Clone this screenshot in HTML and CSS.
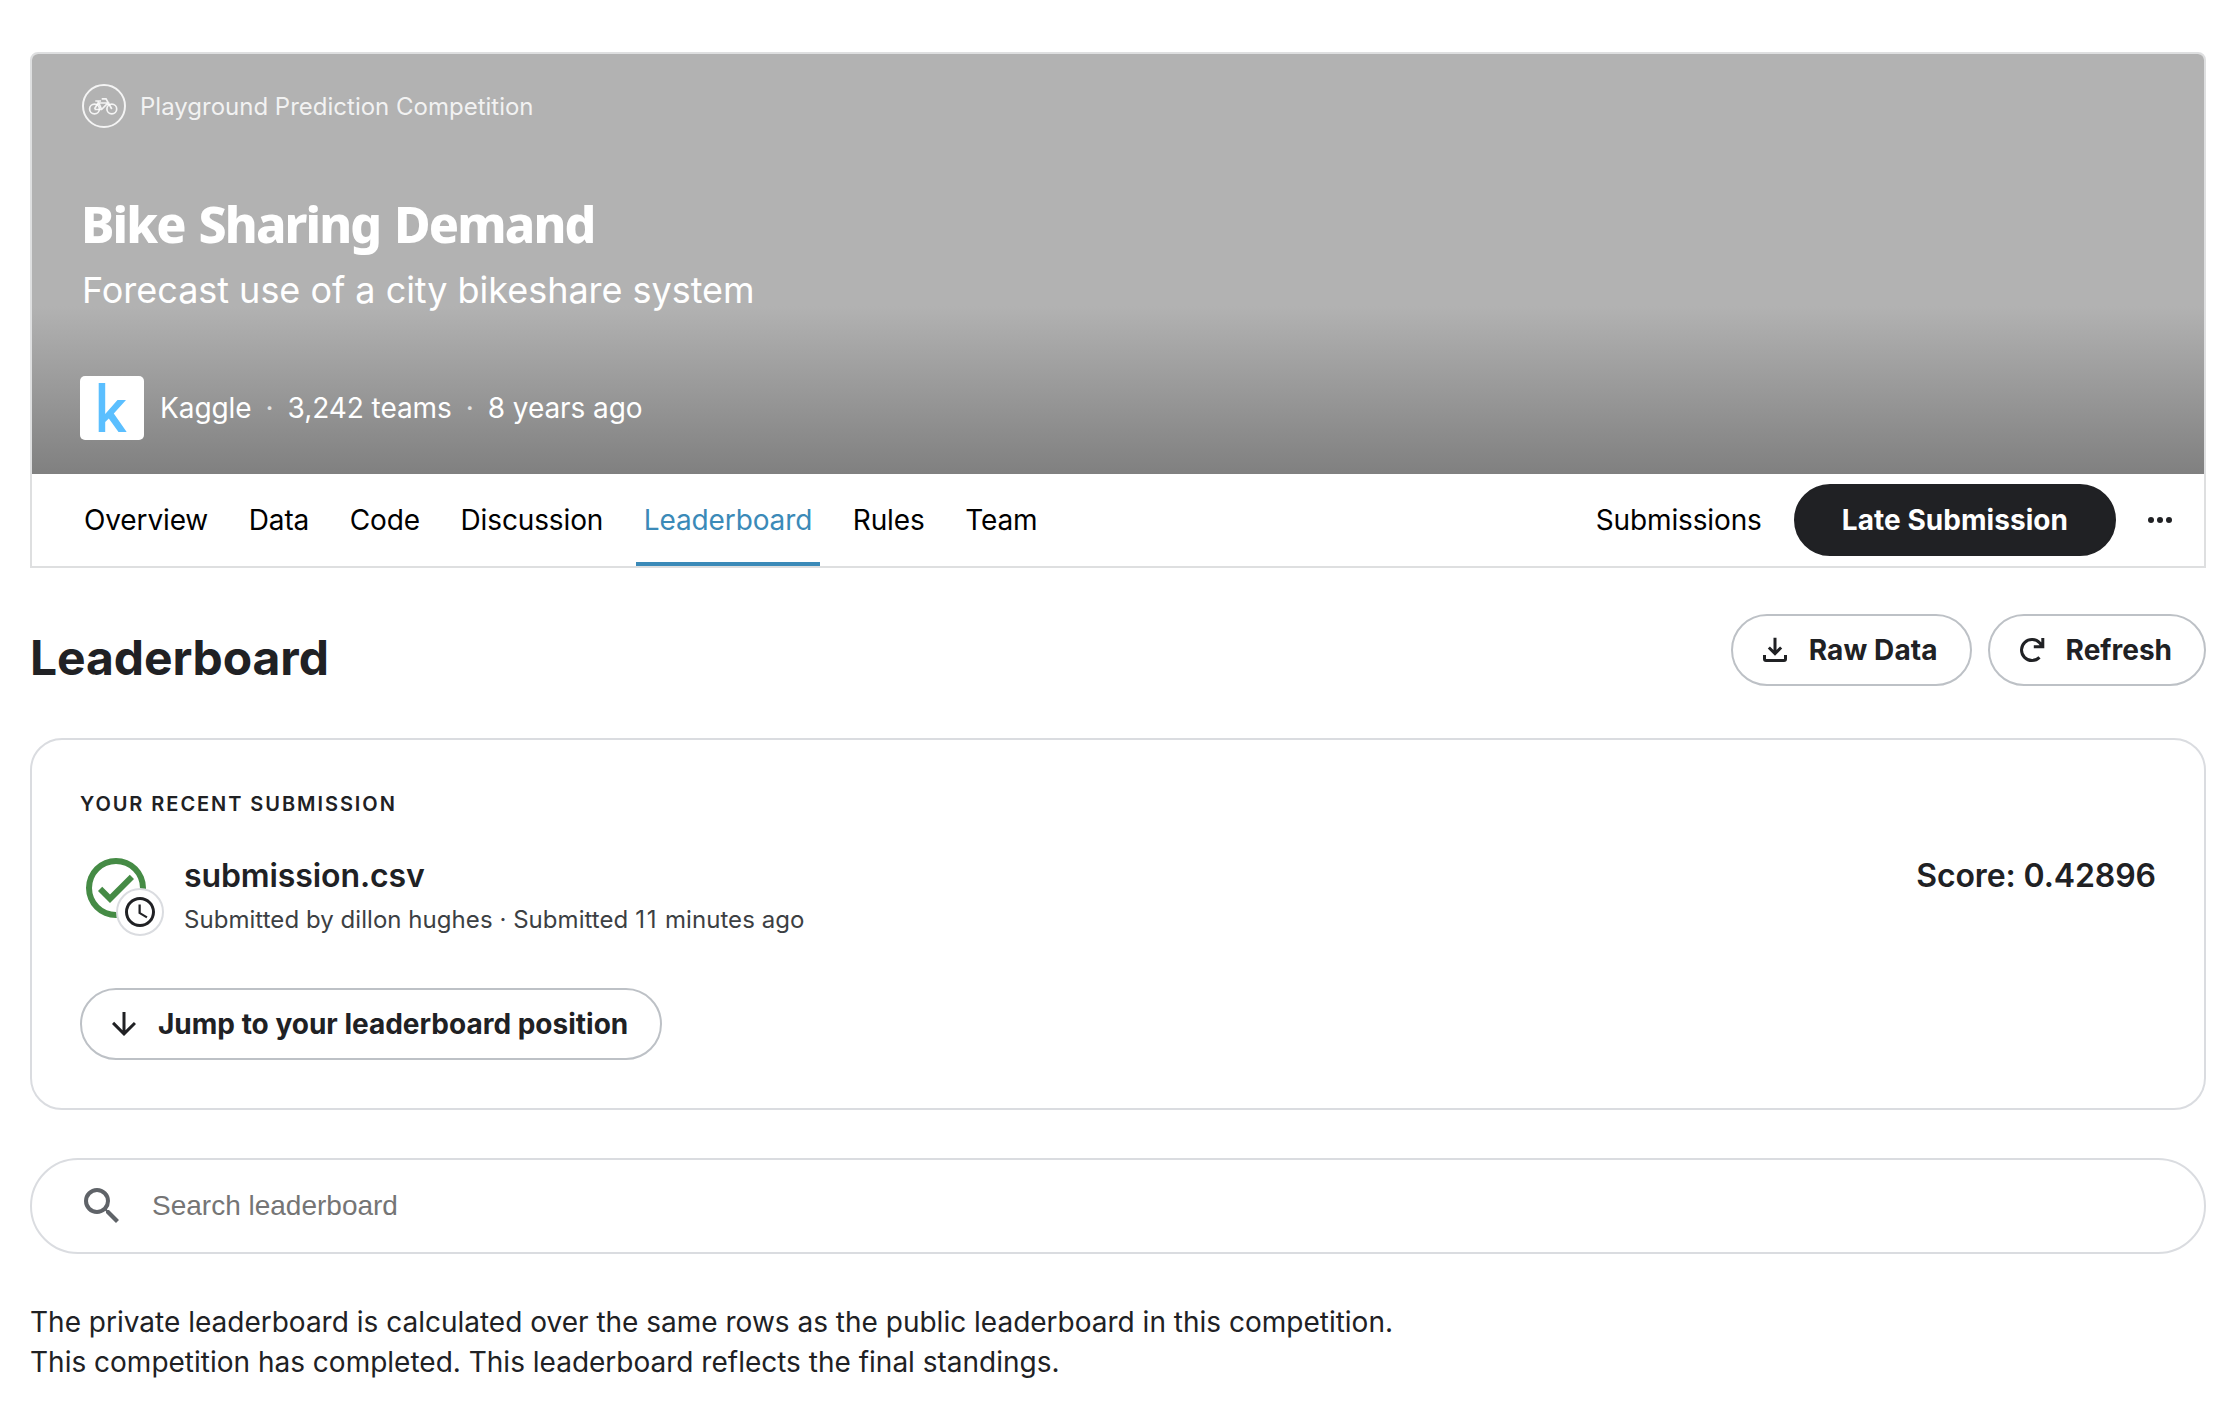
FILE: index.html
```html
<!DOCTYPE html>
<html lang="en">
<head>
<meta charset="utf-8">
<title>Bike Sharing Demand | Kaggle</title>
<link rel="stylesheet" href="styles.css">
</head>
<body>
<main class="page">
  <header class="competition">
    <div class="hero">
      <div class="category">
        <svg class="category-icon" viewBox="0 0 44 44" fill="none" stroke="currentColor" stroke-width="1.700"><circle cx="22" cy="22" r="21" stroke-width="2"/><circle cx="12.500" cy="25" r="4.900"/><circle cx="29.800" cy="25" r="4.900"/><path d="M12.500 25 16 19H25.800L19.600 25.500H12.500M16 17 19.600 25.500M13.300 17H19M19.700 14.800H24L29.800 25"/></svg>
        <span>Playground Prediction Competition</span>
      </div>
      <h1 class="title">Bike Sharing Demand</h1>
      <p class="subtitle">Forecast use of a city bikeshare system</p>
      <div class="host">
        <svg class="host-logo" viewBox="0 0 64 64"><rect width="64" height="64" rx="5" fill="#fff"/><path d="M18.700 7H25.200V38L37.500 24H46L33.800 37.500 46.700 56H38.500L28.800 42.500 25.200 46V56H18.700Z" fill="#5bbfff"/></svg>
        <span>Kaggle</span><span class="sep">·</span><span>3,242 teams</span><span class="sep">·</span><span>8 years ago</span>
      </div>
    </div>
    <nav class="nav">
      <div class="tabs">
        <a class="tab">Overview</a><a class="tab">Data</a><a class="tab">Code</a><a class="tab">Discussion</a><a class="tab active">Leaderboard</a><a class="tab">Rules</a><a class="tab">Team</a>
      </div>
      <a class="submissions">Submissions</a>
      <button class="button dark">Late Submission</button>
      <svg class="more" viewBox="0 0 24 6" fill="currentColor"><circle cx="3" cy="3" r="3"/><circle cx="12" cy="3" r="3"/><circle cx="21" cy="3" r="3"/></svg>
    </nav>
  </header>

  <section class="heading">
    <h2>Leaderboard</h2>
    <div class="actions">
      <button class="button raw"><svg class="icon" viewBox="0 0 24 24" fill="none" stroke="currentColor" stroke-width="2"><path d="M12 3.800V14.500M7.900 10.300 12 14.400 16.100 10.300M5 15.300V18a1 1 0 0 0 1 1H18a1 1 0 0 0 1-1V15.300"/></svg>Raw Data</button>
      <button class="button"><svg class="icon" viewBox="0 0 24 24" fill="none" stroke="currentColor" stroke-width="2"><path d="M17 16.900A7 7 0 1 1 17.200 7.300L19.200 9.800M19.200 4V9.900H13.200"/></svg>Refresh</button>
    </div>
  </section>

  <section class="card">
    <h3>Your recent submission</h3>
    <div class="submission">
      <div class="status">
        <svg class="check" viewBox="0 0 24 24" fill="currentColor"><path d="M12 2a10 10 0 1 0 0 20 10 10 0 0 0 0-20zm0 18a8 8 0 1 1 0-16 8 8 0 0 1 0 16zm4.590-12.420L10 14.170l-2.590-2.580L6 13l4 4 8-8-1.410-1.420z"/></svg>
        <span class="pending"><svg viewBox="0 0 24 24" fill="currentColor"><path d="M11.990 2C6.470 2 2 6.480 2 12s4.470 10 9.990 10C17.520 22 22 17.520 22 12S17.520 2 11.990 2zM12 20a8 8 0 1 1 0-16 8 8 0 0 1 0 16zm.5-13H11v6l5.250 3.150.75-1.230-4.500-2.670z"/></svg></span>
      </div>
      <div class="file"><div class="name">submission.csv</div><div class="meta">Submitted by dillon hughes · Submitted <span class="count">11</span> minutes ago</div></div>
      <div class="score">Score: 0.42896</div>
    </div>
    <button class="button jump"><svg class="icon" viewBox="0 0 24 24" fill="currentColor"><path d="m20 12-1.410-1.410L13 16.170V4h-2v12.170l-5.580-5.590L4 12l8 8 8-8z"/></svg>Jump to your leaderboard position</button>
  </section>

  <label class="search">
    <svg viewBox="0 0 24 24" fill="currentColor"><path d="M15.500 14h-.79l-.28-.27A6.471 6.471 0 0 0 16 9.500 6.500 6.500 0 1 0 9.500 16c1.610 0 3.090-.59 4.230-1.570l.27.28v.79l5 4.990L20.490 19l-4.990-5zm-6 0a4.500 4.500 0 1 1 0-9 4.500 4.500 0 0 1 0 9z"/></svg>
    <input type="text" placeholder="Search leaderboard">
  </label>

  <p class="notes">The private leaderboard is calculated over the same rows as the public leaderboard in this competition.<br>This competition has completed. This leaderboard reflects the final standings.</p>
</main>
</body>
</html>
```
FILE: styles.css
```css
* { box-sizing: border-box; }
body { margin: 0; background: #fff; color: #202124; font: 400 28px/40px Inter, sans-serif; }
h1, h2, h3, p { margin: 0; }
svg { display: block; flex: none; }
.page { width: 2176px; margin: 52px 0 0 30px; }
.competition { height: 516px; border: 2px solid #dedfe0; border-radius: 8px 8px 0 0; overflow: hidden; }
.hero { height: 420px; padding: 30px 48px; color: #fff; background: linear-gradient(#b2b2b2 60%, #808080); }
.category { display: flex; align-items: center; gap: 14px; height: 44px; padding-left: 2px; font-size: 24px; color: rgba(255,255,255,.85); }
.category span { padding-top: 1px; }
.category-icon { width: 44px; height: 44px; }
.title { margin: 60px 0 0 1px; font: 800 50px/72px "Noto Sans", sans-serif; letter-spacing: -1.85px; word-spacing: 2.5px; }
.subtitle { margin: 6px 0 0 2px; font-size: 36px; line-height: 48px; letter-spacing: -.03px; }
.host { display: flex; align-items: center; height: 64px; margin-top: 62px; letter-spacing: -.07px; }
.host-logo { width: 64px; height: 64px; margin-right: 16px; }
.sep { width: 36px; text-align: center; opacity: .75; }
.nav { display: flex; align-items: center; height: 92px; padding: 0 32px 0 44px; color: #000; }
.tabs { display: flex; gap: 24.6px; flex: 1; align-self: stretch; letter-spacing: -.13px; }
.tab { height: 92px; padding: 26px 8px 0; }
.tab.active { color: #3b8ab8; border-bottom: 4px solid #3b8ab8; }
.submissions { margin-right: 32px; letter-spacing: -.13px; }
.button { display: flex; align-items: center; height: 72px; padding: 0 32px 0 24px; border: 2px solid #bdc1c6; border-radius: 36px; background: #fff; color: #202124; font: 700 28px/40px Inter, sans-serif; white-space: nowrap; }
.button.dark { padding: 0 46px; border-color: #202124; background: #202124; color: #fff; letter-spacing: .05px; }
.button.raw { letter-spacing: .1px; }
.more { width: 24px; height: 6px; margin-left: 32px; color: #202124; }
.icon { width: 36px; height: 36px; margin-right: 16px; }
.heading { display: flex; justify-content: space-between; height: 170px; padding-top: 46px; }
h2 { padding-top: 14px; font-size: 48px; line-height: 60px; letter-spacing: -.1px; }
.actions { display: flex; gap: 16px; }
.card { height: 372px; padding: 50px 48px; border: 2px solid #dadce0; border-radius: 32px; }
h3 { font-size: 20px; line-height: 28px; font-weight: 600; letter-spacing: 1.94px; text-transform: uppercase; }
.submission { display: flex; height: 84px; margin-top: 34px; }
.status { position: relative; width: 84px; margin-right: 20px; }
.check { width: 72px; height: 72px; color: #458b45; }
.pending { position: absolute; left: 36px; top: 36px; width: 48px; height: 48px; padding: 4px; border: 2px solid #dadce0; border-radius: 50%; background: #fff; }
.file { flex: 1; padding-top: 4px; }
.name, .score { font-size: 32px; line-height: 40px; font-weight: 600; letter-spacing: -.1px; }
.score { padding-top: 4px; }
.meta { margin-top: 6px; font-size: 24px; line-height: 36px; letter-spacing: .05px; color: #3c4043; }
.count { letter-spacing: 1.8px; }
.jump { margin-top: 52px; }
.search { display: flex; align-items: center; height: 96px; margin-top: 48px; padding-left: 46px; border: 2px solid #dadce0; border-radius: 48px; }
.search svg { width: 48px; height: 48px; color: #5f6368; }
.search input { flex: 1; margin-left: 26px; padding: 0; border: 0; outline: 0; background: none; font: 28px "Liberation Sans", Arial, sans-serif; }
.search input::placeholder { color: #757575; }
.notes { margin-top: 48px; }
```
